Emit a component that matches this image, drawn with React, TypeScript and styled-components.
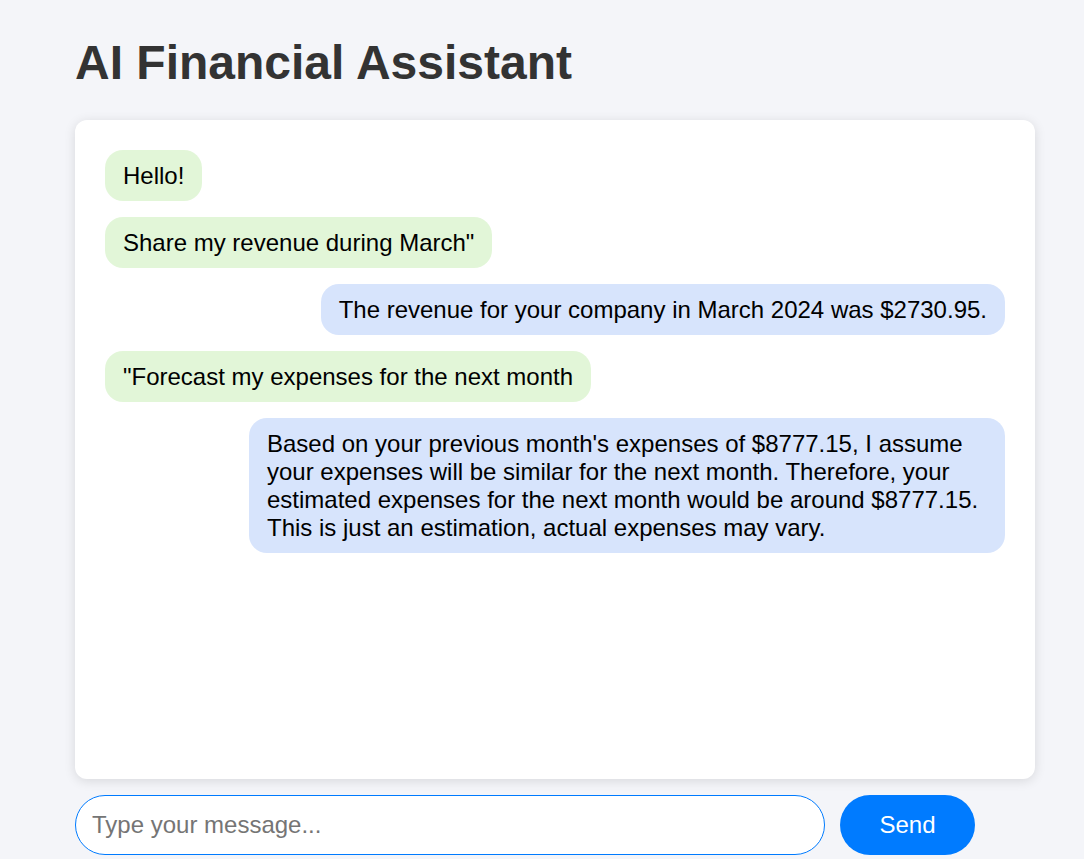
import React from "react";
import styled, { createGlobalStyle } from "styled-components";

const Global = createGlobalStyle`
  html, body { margin: 0; padding: 0; background: #f4f5f9; }
  body { font-family: "Liberation Sans", Arial, sans-serif; }
`;

const Page = styled.div`
  padding: 0 49px 0 75px;
  display: flex;
  flex-direction: column;
`;

const Title = styled.h1`
  margin: 35px 0 0;
  height: 85px;
  font-size: 48px;
  font-weight: 700;
  line-height: 56px;
  color: #333333;
`;

const ChatBox = styled.div`
  background: #ffffff;
  border-radius: 12px;
  box-shadow: 0 2px 12px rgba(0, 0, 0, 0.12);
  height: 599px;
  padding: 30px;
  display: flex;
  flex-direction: column;
  gap: 16px;
`;

const Bubble = styled.div<{ $bot?: boolean }>`
  align-self: ${(p) => (p.$bot ? "flex-end" : "flex-start")};
  background: ${(p) => (p.$bot ? "#d7e4fc" : "#e2f6d8")};
  color: #000;
  font-size: 24px;
  line-height: 28px;
  padding: 11.5px 18px;
  border-radius: 18px;
  max-width: 80%;
`;

const InputRow = styled.div`
  margin-top: 16px;
  display: flex;
  gap: 15px;
`;

const Input = styled.input`
  box-sizing: border-box;
  width: 750px;
  height: 60px;
  padding: 0 16px;
  border: 1px solid #007bff;
  border-radius: 30px;
  font-family: "Liberation Sans", Arial, sans-serif;
  font-size: 24px;
  color: #000;
  background: #fff;
  outline: none;
  &::placeholder { color: #757575; }
`;

const SendButton = styled.button`
  box-sizing: border-box;
  width: 135px;
  height: 60px;
  padding: 0;
  border: none;
  border-radius: 30px;
  background: #007bff;
  color: #fff;
  font-family: "Liberation Sans", Arial, sans-serif;
  font-size: 24px;
  cursor: pointer;
`;

export default function App() {
  return (
    <Page>
      <Global />
      <Title>AI Financial Assistant</Title>
      <ChatBox>
        <Bubble>Hello!</Bubble>
        <Bubble>Share my revenue during March"</Bubble>
        <Bubble $bot>The revenue for your company in March 2024 was $2730.95.</Bubble>
        <Bubble>"Forecast my expenses for the next month</Bubble>
        <Bubble $bot>
          Based on your previous month's expenses of $8777.15, I assume your expenses will be similar
          for the next month. Therefore, your estimated expenses for the next month would be around
          $8777.15. This is just an estimation, actual expenses may vary.
        </Bubble>
      </ChatBox>
      <InputRow>
        <Input placeholder="Type your message..." autoFocus />
        <SendButton>Send</SendButton>
      </InputRow>
    </Page>
  );
}
